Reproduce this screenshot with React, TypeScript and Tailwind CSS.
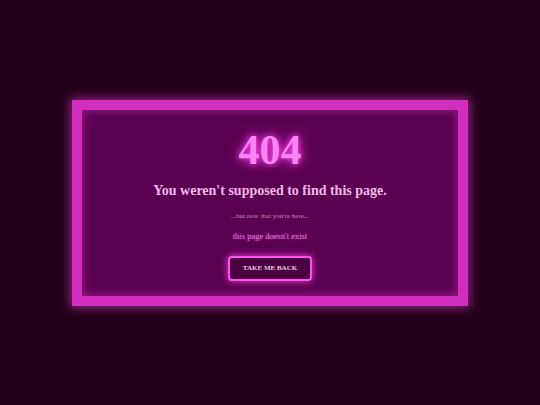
export default function App() {
  return (
    <div
      className="w-[540px] h-[405px] bg-[#230019] flex items-center justify-center"
      style={{ fontFamily: '"Liberation Serif", "Times New Roman", serif' }}
    >
      {/* neon frame */}
      <div className="w-[396px] h-[206px] border-[10px] border-[#d22fc1] bg-[#5b0051] shadow-[0_0_10px_2px_rgba(230,60,215,0.55),inset_0_0_8px_1px_rgba(230,60,215,0.45)] flex flex-col items-center pt-[19px]">
        <div className="text-[42px] leading-none font-bold text-[#ff85f5] [text-shadow:0_0_6px_#ff40f0,0_0_14px_#e030d0]">
          404
        </div>
        <div className="mt-[13px] text-[14px] leading-none font-bold text-[#f2b8ea]">
          You weren't supposed to find this page.
        </div>
        <div className="mt-[15px] text-[7px] leading-none text-[#c98ac0]">
          ...but now that you're here...
        </div>
        <div className="mt-[12px] text-[8.5px] leading-none text-[#e07ad8] [text-shadow:0_0_3px_rgba(255,80,240,0.6)]">
          this page doesn't exist
        </div>
        <button className="mt-[16px] w-[84px] h-[25px] rounded-[4px] border-2 border-[#ff4ff0] bg-[#4a0040] text-[7px] font-bold text-[#f4c6ee] shadow-[0_0_6px_1px_rgba(255,70,240,0.7)] flex items-center justify-center">
          TAKE ME BACK
        </button>
      </div>
    </div>
  );
}
